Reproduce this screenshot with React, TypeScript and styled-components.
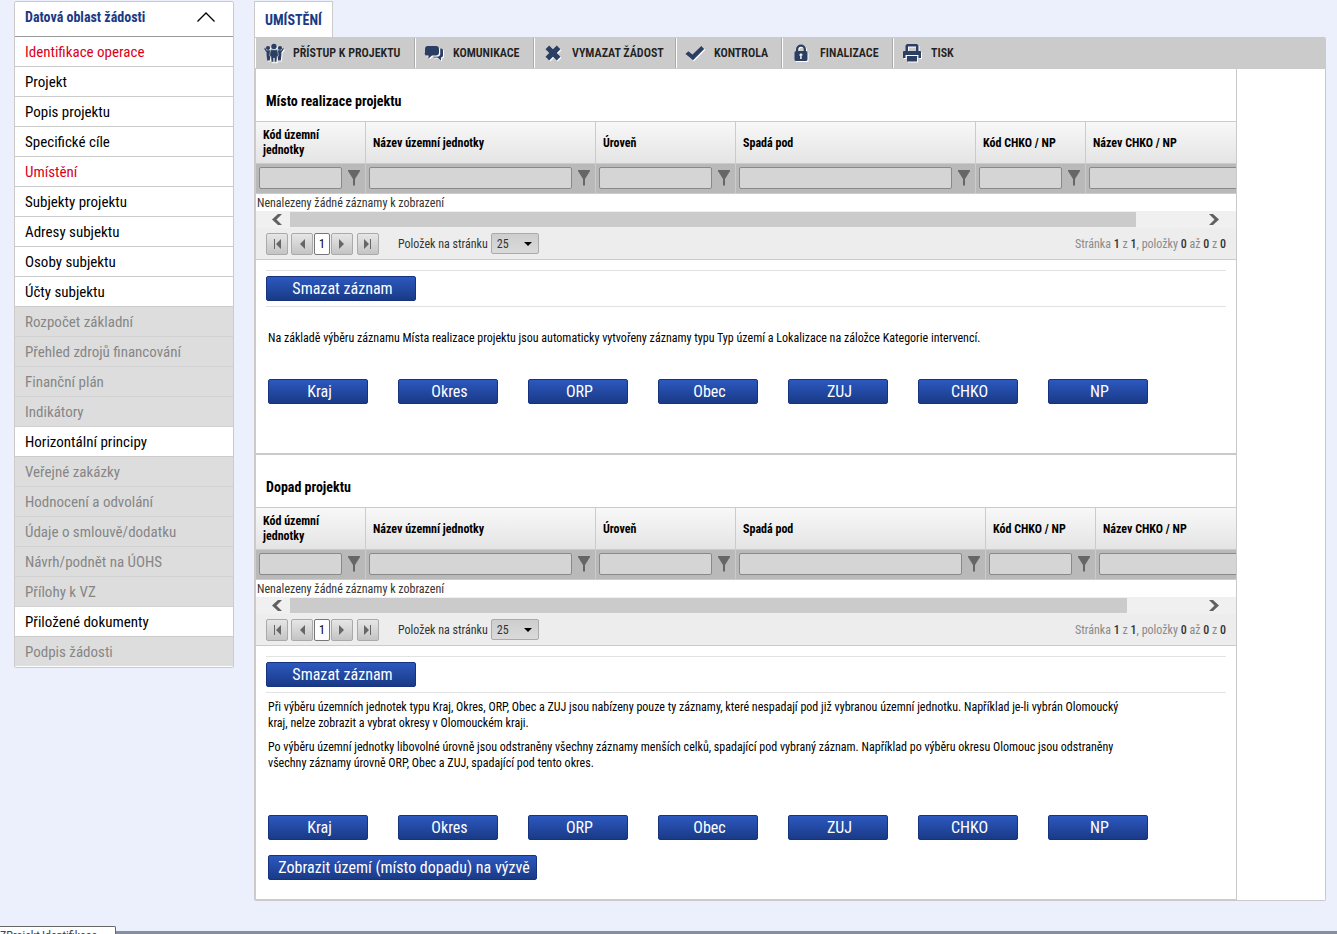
import React from "react";
import styled, { createGlobalStyle, css } from "styled-components";

const line = "#cbcbcb";
const navy = "#2a3f63";

const GlobalStyle = createGlobalStyle`
  *, *::before, *::after { box-sizing: border-box; }
  body {
    margin: 0;
    background: #ecf0fd;
    color: #000;
    font-family: "Roboto Condensed", Roboto, "Liberation Sans", sans-serif;
    font-size: 12px;
    line-height: 16px;
  }
  button, input, select { font: inherit; color: inherit; margin: 0; }
  h2, p, ul { margin: 0; padding: 0; }
`;

const Page = styled.div`
  display: flex;
  align-items: flex-start;
  gap: 20px;
  padding: 1px 11px 33px 14px;
`;

/* ---------- sidebar ---------- */

const Sidebar = styled.nav`
  flex: 0 0 220px;
  border: 1px solid ${line};
  border-radius: 2px;
  background: #fff;
  padding-bottom: 1px;
`;

const SidebarToggle = styled.button`
  display: flex;
  align-items: center;
  justify-content: space-between;
  width: 100%;
  height: 35px;
  padding: 0 17px 4px 10px;
  border: 0;
  border-bottom: 1px solid #999;
  background: none;
  color: #1b3a85;
  font-size: 14px;
  font-weight: 700;
`;

const SidebarList = styled.ul`
  list-style: none;
`;

type ItemState = "normal" | "active" | "disabled";

const SidebarLink = styled.a<{ $state: ItemState }>`
  display: block;
  height: 30px;
  padding-left: 10px;
  border-bottom: 1px solid ${line};
  line-height: 30px;
  font-size: 15px;
  color: #000;
  text-decoration: none;
  ${(p) => p.$state === "active" && css`color: #d9001b;`}
  ${(p) =>
    p.$state === "disabled" &&
    css`
      background: #ddd;
      color: #868686;
      border-bottom-color: #d2d2d2;
    `}
  li:last-child > & {
    height: 29px;
    border-bottom: 0;
  }
`;

/* ---------- main area ---------- */

const Main = styled.main`
  flex: 1;
  min-width: 0;
`;

const Tab = styled.a`
  display: inline-block;
  vertical-align: top;
  height: 36px;
  padding: 0 10px;
  border: 1px solid ${line};
  border-bottom: 0;
  background: #fff;
  line-height: 36px;
  font-size: 14px;
  font-weight: 700;
  color: #1b3a85;
  text-decoration: none;
`;

const Toolbar = styled.div`
  display: flex;
  height: 32px;
  padding: 1px 0 1px 1px;
  border-radius: 0 2px 0 0;
  background: ${line};
`;

const ToolButton = styled.button<{ $width: number }>`
  display: flex;
  align-items: center;
  flex: 0 0 ${(p) => p.$width}px;
  height: 30px;
  padding: 0 0 0 8px;
  border: 0;
  border-left: 1px solid #fff;
  border-right: 1px solid #aaa;
  background: none;
  font-weight: 600;
  color: #222;
  white-space: nowrap;
  &:last-child { border-right: 0; }
`;

const ToolIcon = styled.svg`
  flex: none;
  width: 20px;
  height: 20px;
  margin-right: 9px;
  fill: ${navy};
  filter: drop-shadow(1px 1px 0 #fff);
`;

const Content = styled.div`
  padding-right: 88px;
  border: 1px solid ${line};
  border-top: 0;
  border-left-width: 2px;
  border-radius: 0 0 2px 2px;
  background: #fff;
`;

const Section = styled.section`
  border-right: 1px solid ${line};
  border-bottom: 2px solid ${line};
  &:last-child { border-bottom-width: 1px; }
`;

const SectionTitle = styled.h2`
  padding: 23px 10px 11px;
  line-height: 18px;
  font-size: 14px;
  font-weight: 700;
`;

const TableClip = styled.div`
  overflow: hidden;
`;

const Grid = styled.table`
  width: 1296px;
  table-layout: fixed;
  border-collapse: separate;
  border-spacing: 0;
`;

const HeadCell = styled.th`
  height: 43px;
  padding: 1px 12px 0 7px;
  border: 0 solid ${line};
  border-width: 1px 1px 1px 0;
  background: linear-gradient(#f8f8f8, #e4e4e4);
  text-align: left;
  line-height: 15px;
  font-weight: 700;
`;

const FilterCell = styled.td`
  height: 30px;
  padding: 3px 4px 0 3px;
  border: 0 solid ${line};
  border-width: 0 1px 1px 0;
  background: #b9b9b9;
  vertical-align: top;
`;

const FilterRow = styled.div`
  display: flex;
  align-items: center;
`;

const FilterInput = styled.input`
  flex: 1;
  min-width: 0;
  height: 22px;
  border: 1px solid #898989;
  border-radius: 2px;
  background: #d5d5d5;
`;

const FilterButton = styled.button`
  display: flex;
  align-items: center;
  justify-content: flex-end;
  width: 19px;
  height: 22px;
  padding: 0 1px;
  border: 0;
  background: none;
`;

const EmptyMessage = styled.p`
  height: 17px;
  padding-left: 1px;
  line-height: 18px;
  color: #333;
`;

const ScrollBar = styled.div`
  display: flex;
  align-items: center;
  height: 17px;
  background: #f0f0f0;
`;

const ScrollButton = styled.button`
  display: flex;
  align-items: center;
  justify-content: center;
  flex: 0 0 46px;
  height: 17px;
  padding: 0 0 0 2px;
  border: 0;
  background: none;
  &:first-child { flex-basis: 34px; padding-left: 8px; }
`;

const ScrollTrack = styled.div`
  flex: 1;
`;

const ScrollThumb = styled.div<{ $share: number }>`
  width: ${(p) => p.$share}%;
  height: 15px;
  background: ${line};
`;

const Pager = styled.div`
  display: flex;
  align-items: center;
  height: 32px;
  padding: 0 10px;
  border-bottom: 1px solid ${line};
  background: #ededed;
`;

const PageButton = styled.button<{ $gap: number }>`
  display: flex;
  align-items: center;
  justify-content: center;
  width: 22px;
  height: 22px;
  margin-right: ${(p) => p.$gap}px;
  padding: 0;
  border: 1px solid #aaa;
  border-radius: 2px;
  background: linear-gradient(#e6e6e6, #c4c4c4);
`;

const CurrentPage = styled.button`
  width: 16px;
  height: 22px;
  margin-right: 1px;
  padding: 0;
  border: 1px solid #777;
  border-radius: 2px;
  background: #fff;
`;

const PageSizeLabel = styled.label`
  display: flex;
  align-items: center;
  margin-left: 19px;
  color: #333;
`;

const SelectBox = styled.span`
  display: grid;
  align-items: center;
  margin-left: 3px;
  & > * { grid-area: 1 / 1; }
  & > svg { justify-self: end; margin-right: 7px; pointer-events: none; }
`;

const PageSize = styled.select`
  appearance: none;
  width: 48px;
  height: 21px;
  padding: 0 5px;
  border: 1px solid #aaa;
  border-radius: 2px;
  background: linear-gradient(#cecece, #dadada);
  color: #333;
`;

const PagerInfo = styled.p`
  margin-left: auto;
  color: #8a8a8a;
  b { font-weight: 500; color: #333; }
`;

const DeleteBar = styled.div`
  margin: 10px 10px 0;
  padding: 5px 0;
  border: 1px solid #e2e2e2;
  border-width: 1px 0;
`;

const BlueButton = styled.button<{ $width: number }>`
  width: ${(p) => p.$width}px;
  height: 25px;
  padding: 1px 0 0 3px;
  border: 1px solid #17337f;
  border-radius: 2px;
  background: linear-gradient(#2c58bf, #193a86);
  color: #fff;
  font-size: 16px;
  line-height: 22px;
  white-space: nowrap;
  vertical-align: top;
`;

const Notes = styled.div<{ $tall?: boolean }>`
  display: flex;
  flex-direction: column;
  gap: 8px;
  max-width: 894px;
  padding: ${(p) => (p.$tall ? "23px 12px 33px" : "6px 12px 44px")};
`;

const ButtonRow = styled.div`
  display: flex;
  gap: 30px;
  padding: 0 12px;
`;

const SectionFoot = styled.div<{ $height: number }>`
  height: ${(p) => p.$height}px;
  padding: 15px 12px 0;
`;

/* ---------- window bottom ---------- */

const BottomBar = styled.footer`
  position: fixed;
  inset: auto 0 0 0;
  height: 3px;
  background: #888ea0;
`;

const StatusBubble = styled.div`
  position: fixed;
  left: 0;
  bottom: 0;
  width: 116px;
  height: 8px;
  overflow: hidden;
  border: 1px solid #666;
  border-width: 1px 1px 0 0;
  border-radius: 0 2px 0 0;
  background: #fff;
  line-height: 18px;
  color: #444;
  white-space: nowrap;
`;

/* ---------- icons ---------- */

const PeopleIcon = () => (
  <ToolIcon viewBox="0 0 20 20" aria-hidden="true">
    <circle cx="4" cy="5" r="2.1" />
    <circle cx="16" cy="5" r="2.1" />
    <path d="M1 4.500 2.500 7.200H6.500V12L5.800 17.500H3.200L2.600 12V9.500L.3 6z" />
    <path d="M19 4.500 17.500 7.200H13.500V12l.7 5.500h2.600l.6-5.500V9.500L19.700 6z" />
    <circle cx="10" cy="3.400" r="2.700" />
    <path stroke={line} strokeWidth="0.6" d="M6.600 6.800h6.800l1.100 6-1.300.5-.6 5.700h-2.200v-4h-.8v4H7.400l-.6-5.700-1.300-.5z" />
  </ToolIcon>
);

const ChatIcon = () => (
  <ToolIcon viewBox="0 0 20 20" aria-hidden="true">
    <path d="M3 3h9A3 3 0 0 1 15 6v3.500a3 3 0 0 1-3 3H8L4.500 15.500V12.500H3a2 2 0 0 1-2-3V6A3 3 0 0 1 3 3z" />
    <path d="M16.300 5.500H17A2 2 0 0 1 19 7.500v5a2 2 0 0 1-2 2v3L13.500 14.500H10l-1-.8h4.300a3 3 0 0 0 3-3z" />
  </ToolIcon>
);

const CrossIcon = () => (
  <ToolIcon viewBox="0 0 20 20" aria-hidden="true">
    <path d="M6.200 2.500 10 6.200 13.800 2.500 17.500 6.200 13.800 10l3.700 3.800-3.700 3.700L10 13.800l-3.800 3.700L2.500 13.800 6.200 10 2.500 6.200z" />
  </ToolIcon>
);

const CheckIcon = () => (
  <ToolIcon viewBox="0 0 20 20" aria-hidden="true">
    <path d="M3.300 8.200 7.500 11.500 16.300 3 19.200 6 8 17.200.5 11z" />
  </ToolIcon>
);

const LockIcon = () => (
  <ToolIcon viewBox="0 0 20 20" aria-hidden="true">
    <path
      fillRule="evenodd"
      d="M5 8V6.500a5 5 0 0 1 10 0V8a1.600 1.600 0 0 1 1.500 1.600v6.800a1.600 1.600 0 0 1-1.600 1.600H5.100a1.600 1.600 0 0 1-1.600-1.600V9.600A1.600 1.600 0 0 1 5 8zm2.300 0h5.400V6.500a2.700 2.700 0 0 0-5.400 0zM10 10.500a1.500 1.500 0 0 0-.8 2.800V16h1.600v-2.700a1.500 1.500 0 0 0-.8-2.800z"
    />
  </ToolIcon>
);

const PrintIcon = () => (
  <ToolIcon viewBox="0 0 20 20" aria-hidden="true">
    <path fillRule="evenodd" d="M3.500 2.500 5 1h10l1.500 1.500V8H14V3.500H6V8H3.500z" />
    <path d="M1.500 8h17l.5 1v6h-2.500v-3h-13v3H1V9z" />
    <path d="M5 13h10v5.500H5z" />
  </ToolIcon>
);

const FunnelIcon = () => (
  <svg width="12" height="16" viewBox="0 0 12 16" fill="#666" aria-hidden="true">
    <path d="M0 0h12v1L7 9v6.500H5V9L0 1z" />
  </svg>
);

const Chevron = ({ right }: { right?: boolean }) => (
  <svg width="10" height="11" viewBox="0 0 10 11" fill="#606060" aria-hidden="true">
    <path d={right ? "M0 0h4l6 5.500L4 11H0l5.500-5.500z" : "M10 0H6L0 5.500 6 11h4L4.500 5.500z"} />
  </svg>
);

const PageArrow = ({ right, bar }: { right?: boolean; bar?: boolean }) => (
  <svg width="8" height="10" viewBox="0 0 8 10" fill="#666" aria-hidden="true">
    <path
      d={
        right
          ? `M${bar ? 0 : 1} 0v10l5-5z${bar ? "M6 0h1v10H6z" : ""}`
          : `M${bar ? 8 : 7} 0v10l-5-5z${bar ? "M1 0h1v10H1z" : ""}`
      }
    />
  </svg>
);

/* ---------- data ---------- */

const menu: { text: string; state?: ItemState }[] = [
  { text: "Identifikace operace", state: "active" },
  { text: "Projekt" },
  { text: "Popis projektu" },
  { text: "Specifické cíle" },
  { text: "Umístění", state: "active" },
  { text: "Subjekty projektu" },
  { text: "Adresy subjektu" },
  { text: "Osoby subjektu" },
  { text: "Účty subjektu" },
  { text: "Rozpočet základní", state: "disabled" },
  { text: "Přehled zdrojů financování", state: "disabled" },
  { text: "Finanční plán", state: "disabled" },
  { text: "Indikátory", state: "disabled" },
  { text: "Horizontální principy" },
  { text: "Veřejné zakázky", state: "disabled" },
  { text: "Hodnocení a odvolání", state: "disabled" },
  { text: "Údaje o smlouvě/dodatku", state: "disabled" },
  { text: "Návrh/podnět na ÚOHS", state: "disabled" },
  { text: "Přílohy k VZ", state: "disabled" },
  { text: "Přiložené dokumenty" },
  { text: "Podpis žádosti", state: "disabled" },
];

const tools = [
  { text: "PŘÍSTUP K PROJEKTU", width: 160, Icon: PeopleIcon },
  { text: "KOMUNIKACE", width: 119, Icon: ChatIcon },
  { text: "VYMAZAT ŽÁDOST", width: 142, Icon: CrossIcon },
  { text: "KONTROLA", width: 106, Icon: CheckIcon },
  { text: "FINALIZACE", width: 111, Icon: LockIcon },
  { text: "TISK", width: 90, Icon: PrintIcon },
];

const columns = [
  "Kód územní jednotky",
  "Název územní jednotky",
  "Úroveň",
  "Spadá pod",
  "Kód CHKO / NP",
  "Název CHKO / NP",
];

const regions = ["Kraj", "Okres", "ORP", "Obec", "ZUJ", "CHKO", "NP"];

function RecordGrid({ widths, share }: { widths: number[]; share: number }) {
  return (
    <>
      <TableClip>
        <Grid>
          <colgroup>
            {widths.map((w, i) => (
              <col key={i} width={w} />
            ))}
            <col />
          </colgroup>
          <thead>
            <tr>
              {columns.map((c) => (
                <HeadCell key={c} scope="col">{c}</HeadCell>
              ))}
            </tr>
          </thead>
          <tbody>
            <tr>
              {columns.map((c) => (
                <FilterCell key={c}>
                  <FilterRow>
                    <FilterInput type="text" aria-label={c} />
                    <FilterButton type="button" aria-label={`Filtr: ${c}`}>
                      <FunnelIcon />
                    </FilterButton>
                  </FilterRow>
                </FilterCell>
              ))}
            </tr>
          </tbody>
        </Grid>
      </TableClip>
      <EmptyMessage>Nenalezeny žádné záznamy k zobrazení</EmptyMessage>
      <ScrollBar>
        <ScrollButton type="button" aria-label="Posunout vlevo"><Chevron /></ScrollButton>
        <ScrollTrack><ScrollThumb $share={share} /></ScrollTrack>
        <ScrollButton type="button" aria-label="Posunout vpravo"><Chevron right /></ScrollButton>
      </ScrollBar>
      <Pager>
        <PageButton type="button" $gap={3} aria-label="První"><PageArrow bar /></PageButton>
        <PageButton type="button" $gap={1} aria-label="Předchozí"><PageArrow /></PageButton>
        <CurrentPage type="button">1</CurrentPage>
        <PageButton type="button" $gap={4} aria-label="Další"><PageArrow right /></PageButton>
        <PageButton type="button" $gap={0} aria-label="Poslední"><PageArrow right bar /></PageButton>
        <PageSizeLabel>
          Položek na stránku
          <SelectBox>
            <PageSize defaultValue="25">
              <option>25</option>
              <option>50</option>
            </PageSize>
            <svg width="8" height="4" viewBox="0 0 8 4" aria-hidden="true">
              <path d="M0 0h8L4 4z" />
            </svg>
          </SelectBox>
        </PageSizeLabel>
        <PagerInfo>
          Stránka <b>1</b> z <b>1</b>, položky <b>0</b> až <b>0</b> z <b>0</b>
        </PagerInfo>
      </Pager>
      <DeleteBar>
        <BlueButton type="button" $width={150}>Smazat záznam</BlueButton>
      </DeleteBar>
    </>
  );
}

function RegionButtons() {
  return (
    <ButtonRow>
      {regions.map((r) => (
        <BlueButton key={r} type="button" $width={100}>{r}</BlueButton>
      ))}
    </ButtonRow>
  );
}

export default function App() {
  return (
    <>
      <GlobalStyle />
      <Page>
        <Sidebar>
          <SidebarToggle type="button" aria-expanded="true">
            Datová oblast žádosti
            <svg width="20" height="10" viewBox="0 0 20 10" fill="none" stroke="#000" strokeWidth="1.3" aria-hidden="true">
              <path d="M1.500 9.500 10 1l8.500 8.500" />
            </svg>
          </SidebarToggle>
          <SidebarList>
            {menu.map((m) => (
              <li key={m.text}>
                <SidebarLink href="#" $state={m.state ?? "normal"}>{m.text}</SidebarLink>
              </li>
            ))}
          </SidebarList>
        </Sidebar>
        <Main>
          <Tab href="#">UMÍSTĚNÍ</Tab>
          <Toolbar>
            {tools.map(({ text, width, Icon }) => (
              <ToolButton key={text} type="button" $width={width}>
                <Icon />
                {text}
              </ToolButton>
            ))}
          </Toolbar>
          <Content>
            <Section>
              <SectionTitle>Místo realizace projektu</SectionTitle>
              <RecordGrid widths={[110, 230, 140, 240, 110]} share={94} />
              <Notes $tall>
                <p>
                  Na základě výběru záznamu Místa realizace projektu jsou automaticky vytvořeny záznamy
                  typu Typ území a Lokalizace na záložce Kategorie intervencí.
                </p>
              </Notes>
              <RegionButtons />
              <SectionFoot $height={49} />
            </Section>
            <Section>
              <SectionTitle>Dopad projektu</SectionTitle>
              <RecordGrid widths={[110, 230, 140, 250, 110]} share={93} />
              <Notes>
                <p>
                  Při výběru územních jednotek typu Kraj, Okres, ORP, Obec a ZUJ jsou nabízeny pouze ty
                  záznamy, které nespadají pod již vybranou územní jednotku. Například je-li vybrán
                  Olomoucký kraj, nelze zobrazit a vybrat okresy v Olomouckém kraji.
                </p>
                <p>
                  Po výběru územní jednotky libovolné úrovně jsou odstraněny všechny záznamy menších
                  celků, spadající pod vybraný záznam. Například po výběru okresu Olomouc jsou
                  odstraněny všechny záznamy úrovně ORP, Obec a ZUJ, spadající pod tento okres.
                </p>
              </Notes>
              <RegionButtons />
              <SectionFoot $height={59}>
                <BlueButton type="button" $width={269}>Zobrazit území (místo dopadu) na výzvě</BlueButton>
              </SectionFoot>
            </Section>
          </Content>
        </Main>
      </Page>
      <BottomBar />
      <StatusBubble>ZProjekt,Identifikace</StatusBubble>
    </>
  );
}
